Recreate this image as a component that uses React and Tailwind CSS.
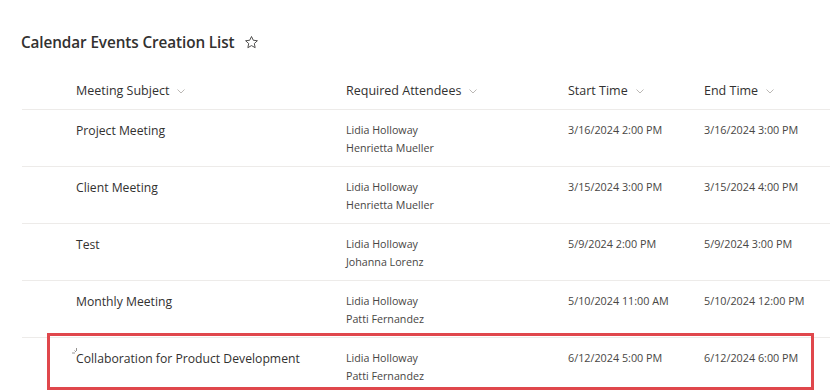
import React from 'react';

const rows = [
    { subject: 'Project Meeting', attendees: ['Lidia Holloway', 'Henrietta Mueller'], start: '3/16/2024 2:00 PM', end: '3/16/2024 3:00 PM' },
    { subject: 'Client Meeting', attendees: ['Lidia Holloway', 'Henrietta Mueller'], start: '3/15/2024 3:00 PM', end: '3/15/2024 4:00 PM' },
    { subject: 'Test', attendees: ['Lidia Holloway', 'Johanna Lorenz'], start: '5/9/2024 2:00 PM', end: '5/9/2024 3:00 PM' },
    { subject: 'Monthly Meeting', attendees: ['Lidia Holloway', 'Patti Fernandez'], start: '5/10/2024 11:00 AM', end: '5/10/2024 12:00 PM' },
    { subject: 'Collaboration for Product Development', attendees: ['Lidia Holloway', 'Patti Fernandez'], start: '6/12/2024 5:00 PM', end: '6/12/2024 6:00 PM', isNew: true, highlight: true },
];

const Chevron = () => (
    <svg width="10" height="10" viewBox="0 0 10 10" className="ml-[7px] text-[#b3b0ad]">
        <path d="M1.5 3.5 L5 7 L8.5 3.5" fill="none" stroke="currentColor" strokeWidth="0.9" />
    </svg>
);

const Star = () => (
    <svg width="15" height="15" viewBox="0 0 16 16" className="text-[#323130]">
        <path
            d="M8 1.6 L9.9 5.6 L14.3 6.1 L11 9.1 L11.9 13.5 L8 11.3 L4.1 13.5 L5 9.1 L1.7 6.1 L6.1 5.6 Z"
            fill="none"
            stroke="currentColor"
            strokeWidth="0.9"
            strokeLinejoin="round"
        />
    </svg>
);

const NewMark = () => (
    <svg width="8" height="8" viewBox="0 0 8 8" className="absolute left-[-5px] top-[-3px] text-[#8a8886]">
        <path d="M1 6 L4 6 M3.5 3.5 L5 5 M5.5 1 L5.5 4" stroke="currentColor" strokeWidth="0.9" />
    </svg>
);

const cols = 'grid grid-cols-[54px_270px_222px_136px_1fr]';

export default function App() {
    return (
        <div className="w-[830px] h-[392px] overflow-hidden bg-white text-[#323130] font-['Open_Sans',sans-serif]">
            <div className="pl-[21px] pt-[31px] flex items-center h-[53px]">
                <h1 className="text-[15.3px] font-semibold tracking-[-0.1px]">Calendar Events Creation List</h1>
                <span className="ml-[9px] mt-[1px]">
                    <Star />
                </span>
            </div>

            <div className="ml-[22px] mt-[20px]">
                <div className={`${cols} h-[37px] items-center border-b border-[#edebe9] text-[12.5px]`}>
                    <div />
                    <div className="flex items-center">Meeting Subject<Chevron /></div>
                    <div className="flex items-center">Required Attendees<Chevron /></div>
                    <div className="flex items-center">Start Time<Chevron /></div>
                    <div className="flex items-center">End Time<Chevron /></div>
                </div>

                {rows.map((row) => (
                    <div key={row.subject} className="relative">
                        <div className={`${cols} h-[57px] border-b border-[#edebe9]`}>
                            <div />
                            <div className="pt-[12px] text-[12.2px]">
                                <span className="relative">
                                    {row.isNew && <NewMark />}
                                    {row.subject}
                                </span>
                            </div>
                            <div className="pt-[11px] text-[10.7px] leading-[18px] text-[#484644]">
                                {row.attendees.map((a) => (
                                    <div key={a}>{a}</div>
                                ))}
                            </div>
                            <div className="pt-[11px] text-[10.8px] leading-[18px] text-[#484644]">{row.start}</div>
                            <div className="pt-[11px] text-[10.8px] leading-[18px] text-[#484644]">{row.end}</div>
                        </div>
                        {row.highlight && (
                            <div className="absolute left-[25px] top-[-5px] w-[767px] h-[57px] border-[3px] border-[#e0474c] pointer-events-none" />
                        )}
                    </div>
                ))}
            </div>
        </div>
    );
}
